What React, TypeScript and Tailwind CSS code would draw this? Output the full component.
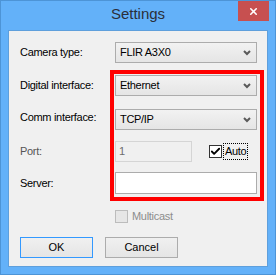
import { Check, X } from 'lucide-react'

const font = { fontFamily: '"Liberation Sans", Arial, sans-serif' }

const Chevron = () => (
  <svg width="8" height="6" viewBox="0 0 8 6" className="shrink-0">
    <path d="M1 1 L4 4 L7 1" fill="none" stroke="#5a5a5a" strokeWidth="2" />
  </svg>
)

const Combo = ({ value }: { value: string }) => (
  <div className="flex h-[21px] w-[142px] items-center justify-between border border-[#acacac] bg-gradient-to-b from-[#f2f2f2] to-[#e5e5e5] pl-[4px] pr-[5px] text-[11px] tracking-[-0.3px] text-black">
    <span>{value}</span>
    <Chevron />
  </div>
)

const Label = ({ children, className = '' }: { children: string; className?: string }) => (
  <div className={`flex items-center text-[11px] tracking-[-0.3px] ${className}`}>{children}</div>
)

export default function App() {
  return (
    <div style={font} className="flex h-[275px] w-[276px] flex-col border border-[#4d94d6] bg-[#63b1f9] px-[7px] pb-[7px]">
      {/* title bar */}
      <div className="relative flex h-[29px] items-center justify-center pb-[2px]">
        <span className="text-[15px] text-[#2b2f3a]">Settings</span>
        <div className="absolute right-[-1px] top-0 flex h-[20px] w-[31px] items-center justify-center bg-[#c75050]">
          <X size={11} strokeWidth={3.5} color="#fff" />
        </div>
      </div>

      {/* client area */}
      <div className="flex flex-1 flex-col border border-[#5e9fdc] bg-[#f0f0f0] pl-[11px]">
        <div className="flex">
          {/* labels */}
          <div className="flex w-[90px] flex-col text-black">
            <Label className="mt-[11px] h-[21px]">Camera type:</Label>
            <Label className="mt-[12px] h-[21px]">Digital interface:</Label>
            <Label className="mt-[11px] h-[21px]">Comm interface:</Label>
            <Label className="mt-[13px] h-[21px] text-[#555555]">Port:</Label>
            <Label className="mt-[10px] h-[22px]">Server:</Label>
          </div>

          {/* controls */}
          <div className="flex flex-col">
            <div className="mt-[11px] pl-[5px]">
              <Combo value="FLIR A3X0" />
            </div>

            <div className="mt-[7px] flex w-[154px] flex-col border-4 border-[#ff0000] pb-[3px] pl-[1px] pr-[3px] pt-[1px]">
              <Combo value="Ethernet" />
              <div className="mt-[13px]">
                <Combo value="TCP/IP" />
              </div>
              <div className="mt-[11px] flex items-center">
                <div className="flex h-[21px] w-[77px] items-center border border-[#d5d5d5] bg-[#f0f0f0] pl-[3px] text-[11px] text-[#6d6d6d]">
                  1
                </div>
                <div className="ml-[17px] flex h-[13px] w-[13px] items-center justify-center border border-[#333] bg-white">
                  <Check size={11} strokeWidth={4} color="#000" />
                </div>
                <span className="ml-[1px] border border-dotted border-black px-[1px] text-[11px] leading-[15px] tracking-[-0.3px] text-black">
                  Auto
                </span>
              </div>
              <div className="mt-[10px] h-[22px] w-[142px] border border-[#acacac] bg-white" />
            </div>

            <div className="mt-[7px] flex items-center pl-[5px]">
              <div className="h-[13px] w-[13px] border border-[#bcbcbc] bg-[#e6e6e6]" />
              <span className="ml-[4px] text-[11px] tracking-[-0.3px] text-[#8d8d8d]">Multicast</span>
            </div>
          </div>
        </div>

        {/* buttons */}
        <div className="mt-[12px] flex gap-[12px]">
          <button className="flex h-[21px] w-[73px] items-center justify-center border border-[#3399ff] bg-gradient-to-b from-[#f0f0f0] to-[#e5e5e5] text-[11px] text-black">
            OK
          </button>
          <button className="flex h-[21px] w-[73px] items-center justify-center border border-[#acacac] bg-gradient-to-b from-[#f0f0f0] to-[#e5e5e5] text-[11px] text-black">
            Cancel
          </button>
        </div>
      </div>
    </div>
  )
}
